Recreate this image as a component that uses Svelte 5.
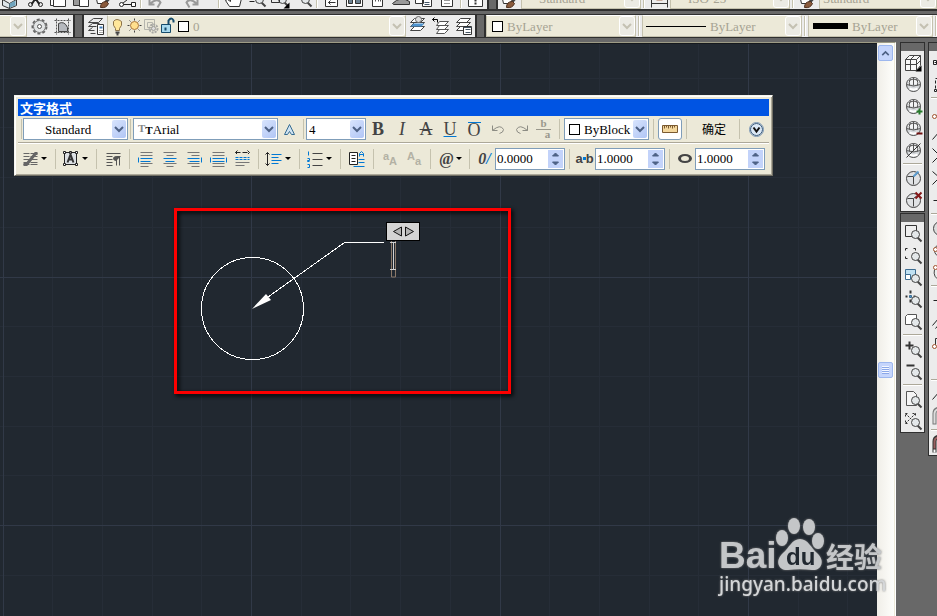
<script lang="ts">
    type Item = { icon: string; label: string; wide?: boolean };

    // shared shapes, drawn on a 22x22 grid
    const lens =
        '<path d="M15 15l4 4" stroke="#444" stroke-width="2"/><circle cx="13" cy="12" r="4" fill="#e4e8ea" stroke="#444"/>';
    const globe =
        '<circle cx="11" cy="11" r="7" fill="#d4d7da" stroke="#4a4a4a"/><path d="M6 6q5-3 10 0l1 5H5z" fill="#f2f3f4"/><path d="M6 7q5-3 10 0M4 11q7 3 14 0M8 5q-2 4-1 7M14 5q2 4 1 7M11 4v8" fill="none" stroke="#555"/><path d="M7 15q4 2 8 0" fill="none" stroke="#fff" stroke-width="2"/>';
    const solid =
        '<circle cx="11" cy="11" r="7" fill="#e0e2e4" stroke="#444"/><path d="M5 9h6l5-4M11 9v8" fill="none" stroke="#444"/>';
    const sheets =
        '<path d="M7 3h10l-4 4H3zM7 7h10l-4 4H3zM7 11h10l-4 4H3z" fill="#fff" stroke="#444"/>';
    const node = (x: number, y: number) =>
        `<circle cx="${x}" cy="${y}" r="2" fill="#fff" stroke="#a0522d"/>`;

    const icons: Record<string, string> = {
        box: '<path d="M1 12l7-5 7 5v6l-7 3-7-3zM1 12l7 4 7-4M8 16v5" fill="#dfe6ea" stroke="#333"/><path d="M8 16l6-3v5l-6 2z" fill="#6fa4bd"/>',
        cut: '<path d="M7 5l8 12M15 5L7 17" stroke="#222" stroke-width="2"/><circle cx="6" cy="17" r="2" fill="none" stroke="#222"/><circle cx="16" cy="17" r="2" fill="none" stroke="#222"/>',
        copy: '<path d="M3 6h11v12H3z" fill="#fff" stroke="#333"/><path d="M6 10h12v9H6z" fill="#fff" stroke="#333"/>',
        paste: '<path d="M3 4h11v14H3z" fill="#999" stroke="#333"/><path d="M9 10h9v9H9z" fill="#fff" stroke="#333"/>',
        brush: '<path d="M2 7h12v9H4z" fill="#fff" stroke="#333"/><path d="M18 8l-6 7" stroke="#444" stroke-width="3"/><path d="M13 14q-6 0-6 6 6 1 8-4z" fill="#8a5a3c" stroke="#4e3020"/>',
        edit: '<path d="M4 17h12M6 16l10-8" stroke="#222"/><circle cx="5" cy="17" r="2" fill="#fff" stroke="#222"/><path d="M15 15h4v4h-4z" fill="#fff" stroke="#222"/>',
        undo: '<path d="M5 11v6h5M6 16q7-6 10-1l-3 5" fill="none" stroke="#999" stroke-width="2"/>',
        redo: '<path d="M17 11v6h-5M16 16q-7-6-10-1l3 5" fill="none" stroke="#999" stroke-width="2"/>',
        hand: '<path d="M6 19l-4-6 2-1 3 2V6l4-1 4 2 3 4-2 8z" fill="#fff" stroke="#333"/>',
        zoomIn: `${lens}<path d="M3 14h5" stroke="#222"/>`,
        zoomWin: `${lens}<path d="M2 6h8v9H2z" fill="none" stroke="#333"/><path d="M20 15v6h-6z" fill="#000"/>`,
        zoomPrev: lens,
        panel: '<path d="M4 4h12v15H4z" fill="#fff" stroke="#333"/><path d="M7 15h7M9 13l-2 2 2 2" fill="none" stroke="#333"/>',
        center: '<path d="M2 5h16v14H2z" fill="#fff" stroke="#333"/><path d="M4 12h4v4H4zM11 12h5v4h-5z" fill="#6d8291" stroke="#333"/>',
        palette: '<path d="M5 4h10v15H5z" fill="#fff" stroke="#333"/><path d="M8 8v8M11 8v8M13 8v8" stroke="#555" stroke-dasharray="2"/>',
        sheet: '<path d="M2 16q8-8 17-2v3H3z" fill="#999" stroke="#333"/>',
        markup: '<path d="M2 8h8v8H2zM9 12h9v7H9z" fill="#fff" stroke="#333"/><path d="M11 15h5M11 17h5" stroke="#456"/>',
        calc: '<path d="M5 4h11v15H5z" fill="#fff" stroke="#333"/><path d="M8 13h6M8 16h6" stroke="#333" stroke-dasharray="1 1"/>',
        help: '<path d="M3 5h14v14H3z" fill="#fff" stroke="#333"/><path d="M10 8v6M10 15v2" stroke="#333" stroke-width="2"/>',
        dim: '<path d="M3 8v12M19 8v12M3 16h16" stroke="#333"/><path d="M8 8h6v5H8z" fill="#a56b4f"/>',
        gear: '<circle cx="11" cy="11" r="7" fill="#e3e5e6" stroke="#666" stroke-width="2" stroke-dasharray="3 2"/><circle cx="11" cy="11" r="6" fill="#e3e5e6" stroke="#777"/><circle cx="11" cy="11" r="2" fill="#fff" stroke="#555"/>',
        frame: '<path d="M5 3v16M17 3v16M3 5h16M3 17h16" stroke="#555" stroke-dasharray="2 1"/><path d="M7 8q6-3 9 4v4H7z" fill="#b6b9be" stroke="#444"/>',
        layers: '<path d="M8 3h9l-4 4H3zM7 8h7M7 8l-4 3h8M7 12l-4 3h6M5 18h5" fill="none" stroke="#444"/><path d="M12 9h6v10h-6z" fill="#fff" stroke="#333"/><path d="M14 11h3v2h-3z" fill="#3f79b5"/><path d="M14 15h3M14 17h3" stroke="#555" stroke-dasharray="1"/>',
        layerMake: `${sheets}<path d="M6 8h11l-3 3H3z" fill="#4f94cf"/><circle cx="11" cy="4" r="3" fill="#ddd" stroke="#666"/>`,
        layerPrev: '<path d="M9 6h9l-4 4H6zM9 10h9l-4 4H6zM9 14h9l-4 4H6z" fill="#fff" stroke="#555"/><path d="M2 4h5v3M4 2L2 4l2 2" fill="none" stroke="#000"/>',
        layerState: `${sheets}<path d="M10 11h8v8h-8z" fill="#fff" stroke="#333"/><path d="M10 12h8M12 14h5M12 17h5" stroke="#456"/>`,
        bulb: '<path d="M8 13q-3-3-2-7 3-4 8 0 1 4-2 7v2H8z" fill="#ffe79a" stroke="#8d744b"/><path d="M8 17h4M9 19h2" stroke="#444" stroke-width="2"/>',
        sun: '<circle cx="10" cy="10" r="4" fill="#ffe08d" stroke="#ab783f"/><path d="M10 3v2M10 15v2M3 10h2M15 10h2M5 5l1 1M14 14l1 1M15 5l-1 1M6 14l-1 1" stroke="#444"/>',
        freeze: '<path d="M3 4h10v10H3zM6 7h5v5H6z" fill="none" stroke="#b5b5ad"/><circle cx="12" cy="13" r="4" fill="none" stroke="#a8a8a4" stroke-width="2" stroke-dasharray="2 1"/><circle cx="12" cy="13" r="2" fill="#ddd" stroke="#9c9c98"/>',
        lock: '<path d="M3 9h9v8H3z" fill="#a8d9ee" stroke="#164b6b"/><path d="M10 9V5q3-4 5 0v2M7 12v3" fill="none" stroke="#164b6b" stroke-width="2"/>',
        cube: '<path d="M3 8l4-4h11v10l-4 5H3z" fill="#f7f7f7" stroke="#444"/><path d="M3 8h11v11M14 8l4-4M8 8v11M3 13h11l4-4M8 8l4-4" fill="none" stroke="#444"/><path d="M19 14v6h-6z" fill="#000"/>',
        globe,
        globeAdd: `${globe}<path d="M17 13v6M14 16h6" stroke="#277a2b" stroke-width="2"/>`,
        globeSub: `${globe}<path d="M14 16h6" stroke="#701010" stroke-width="2"/>`,
        globeOff: `${globe}<path d="M4 18L18 4" stroke="#333"/>`,
        solid: `${solid}<path d="M11 9l5-5" stroke="#5c9ccf" stroke-width="2"/>`,
        solidDel: `${solid}<path d="M13 3l6 6M19 3l-6 6" stroke="#851818" stroke-width="2"/>`,
        zWindow: `<path d="M3 3h11v11H3z" fill="#eee" stroke="#333"/>${lens}`,
        zDynamic: `<path d="M3 6V4h2M11 4h2v2M3 12v2h2" fill="none" stroke="#222"/>${lens}`,
        zScale: `<path d="M3 3h10v9H3z" fill="#bfe0f2" stroke="#3c6c91"/><path d="M3 8h5v5H3z" fill="#fff" stroke="#3c6c91"/>${lens}`,
        zCenter: `<path d="M8 2v3M8 11v3M3 8h2M11 8h2" stroke="#333" stroke-width="2"/><path d="M7 7h2v2H7z" fill="#4f94cf" stroke="#3c6c91"/>${lens}`,
        zObject: `<path d="M3 6l2-2h9v8l-2 2H3z" fill="#fff" stroke="#555"/>${lens}`,
        zPlus: `<path d="M7 3v8M3 7h8" stroke="#333" stroke-width="2"/>${lens}`,
        zMinus: `<path d="M4 5h8" stroke="#333" stroke-width="2"/>${lens}`,
        zAll: `<path d="M4 3h7l3 3v11H4z" fill="#f5f5f5" stroke="#555"/>${lens}`,
        zExtents: `<path d="M3 3l10 10M13 3L3 13M3 6V3h3M10 3h3v3M3 10v3h3" fill="none" stroke="#333" stroke-dasharray="2 1"/>${lens}`,
        dLine: '<path d="M4 11h10M3 9h3v4H3z" fill="#fff" stroke="#222"/>',
        dDash: '<path d="M5 15V5h9" fill="none" stroke="#222" stroke-dasharray="3 2"/><path d="M4 16h2v2H4z" fill="#fff" stroke="#222"/>',
        dCurve: `<path d="M6 14l6-7" stroke="#333"/>${node(4, 15)}`,
        dSlash: '<path d="M2 16l7-8" stroke="#222"/>',
        dCross: '<path d="M2 3l7 7-7 7" fill="none" stroke="#222"/>',
        dBack: '<path d="M2 4l8 7M2 17l5-5" stroke="#222" stroke-dasharray="7 2"/>',
        dFlat: '<path d="M3 11h14" stroke="#222"/>',
        dCircle: '<circle cx="10" cy="11" r="7" fill="#ddd" stroke="#444"/>',
        dEllipse: `<circle cx="10" cy="11" r="6" fill="none" stroke="#444"/>${node(5, 10)}`,
        dArc: `<path d="M4 8q-2 8 6 11" fill="none" stroke="#444"/>${node(5, 6)}`,
        dHatch: '<path d="M2 14l6-7M5 17l6-7" stroke="#222"/>',
        dRoute: `<path d="M5 12V5h5" fill="none" stroke="#333"/>${node(4, 13)}`,
        dBlank: '',
        dMagnet: '<path d="M4 19V8q0-5 6-5" fill="none" stroke="#777" stroke-width="4"/><path d="M4 18V8q0-4 6-5" fill="none" stroke="#ddd" stroke-width="2"/>',
        dMagnetOn: '<path d="M4 19V8q0-5 6-5" fill="none" stroke="#333" stroke-width="4"/><path d="M4 15V8q0-4 6-5" fill="none" stroke="#996060" stroke-width="2"/><path d="M4 16v3" stroke="#fff" stroke-width="2"/>',
        annotative: '<path d="M10 6L5 16h3l2-3 2 3h3z" fill="#cfe3f2" stroke="#356b91"/>',
        smallUndo: '<path d="M5 7v5h5M5 12q8-7 11-1 0 3-4 4" fill="none" stroke="#8c8c84"/>',
        smallRedo: '<path d="M17 7v5h-5M17 12q-8-7-11-1 0 3 4 4" fill="none" stroke="#8c8c84"/>',
        ruler: '<path d="M3 7h15v7H3z" fill="#f3d79d" stroke="#7b5a31"/><path d="M5 7v3M7 7v2M9 7v3M11 7v2M13 7v3M15 7v2" stroke="#7b5a31"/>',
        options: '<circle cx="11" cy="11" r="6" fill="#dbe8f5" stroke="#33557a"/><circle cx="11" cy="11" r="7" fill="none" stroke="#7c97b5"/><path d="M8 9l3 4 3-4" fill="none" stroke="#111" stroke-width="2"/>',
        columns: '<path d="M4 5h6M4 8h6M4 11h6M4 14h6M4 16h6M11 5h7M11 8h7M11 11h7M11 14h7M11 16h7" stroke="#666"/><path d="M4 16h3L16 5h2" fill="none" stroke="#666" stroke-width="3"/>',
        justify: '<path d="M4 4h12v12H4z" fill="#dce0e3" stroke="#222"/><path d="M3 3h2v2H3zM9 3h2v2H9zM15 3h2v2h-2zM3 15h2v2H3zM15 15h2v2h-2z" fill="#fff" stroke="#222"/><path d="M7 14l3-8 3 8M8 11h4" fill="none" stroke="#333" stroke-width="2"/>',
        paragraph: '<path d="M4 5h14M4 8h6M4 11h6M4 14h6M4 17h6" stroke="#555"/><path d="M14 17V8M17 17V8M18 8h-4q-3 0-3 2t3 2" fill="#555" stroke="#555"/>',
        left: '<path d="M5 4h12M5 7h12M5 15h12M5 18h8" stroke="#777"/><path d="M3 9v5M5 10h12M5 13h10" stroke="#0078d4"/>',
        middle: '<path d="M4 4h13M7 7h7M4 15h13M7 18h7" stroke="#777"/><path d="M4 10h13M6 13h9" stroke="#0078d4"/>',
        right: '<path d="M4 4h12M8 7h8M4 15h12M8 18h8" stroke="#777"/><path d="M18 9v5M4 10h12M6 13h10" stroke="#0078d4"/>',
        full: '<path d="M5 4h12M5 7h12M5 15h12M5 18h12" stroke="#777"/><path d="M3 9v5M19 9v5M5 10h12M5 13h12" stroke="#0078d4"/>',
        spread: '<path d="M4 4h14M6 2L4 4l2 2M16 2l2 2-2 2" fill="none" stroke="#222" stroke-dasharray="5 2"/><path d="M4 9h14M4 11h14" stroke="#0078d4" stroke-dasharray="3 1"/><path d="M4 14h14M4 17h9" stroke="#777"/>',
        spacing: '<path d="M4 4v13M2 6l2-2 2 2M2 15l2 2 2-2" fill="none" stroke="#222"/><path d="M8 6h10M8 9h7M8 12h10M8 15h7" stroke="#0078d4"/>',
        numbers: '<path d="M4 3v4M3 10h2v2H3v1h2M3 16h2v3H3" fill="none" stroke="#0078d4"/><path d="M8 5h10M8 11h10M8 17h10" stroke="#444"/>',
        field: '<path d="M3 4h8v12H3z" fill="#fff" stroke="#222"/><path d="M5 7h4M5 10h4M5 13h4" stroke="#222"/><path d="M13 8V5l2-2 2 2v3M13 6h4M12 11h6M12 14h6M7 18h11" fill="none" stroke="#0078d4"/>',
    };

    const standard: (Item | null)[] = [
        { icon: 'box', label: '3D' },
        { icon: 'cut', label: 'Cut' },
        { icon: 'copy', label: 'Copy' },
        { icon: 'paste', label: 'Paste' },
        { icon: 'brush', label: 'Match properties' },
        { icon: 'edit', label: 'Block editor' },
        null,
        { icon: 'undo', label: 'Undo', wide: true },
        { icon: 'redo', label: 'Redo', wide: true },
        null,
        { icon: 'hand', label: 'Pan' },
        { icon: 'zoomIn', label: 'Zoom realtime' },
        { icon: 'zoomWin', label: 'Zoom window' },
        { icon: 'zoomPrev', label: 'Zoom previous' },
        null,
        { icon: 'panel', label: 'Properties' },
        { icon: 'center', label: 'Design center' },
        { icon: 'palette', label: 'Tool palettes' },
        { icon: 'sheet', label: 'Sheet set' },
        { icon: 'markup', label: 'Markup' },
        { icon: 'calc', label: 'Calculator' },
        null,
        { icon: 'help', label: 'Help' },
    ];

    const modeling = ['cube', 'globe', 'globeAdd', 'globeSub', 'globeOff', '', 'solid', 'solidDel'];
    const zooming = ['zWindow', 'zDynamic', 'zScale', 'zCenter', 'zObject', '', 'zPlus', 'zMinus', '', 'zAll', 'zExtents'];
    const snapping = [
        'dLine', 'dDash', '', 'dCurve', 'dSlash', 'dCross', 'dBack', 'dFlat', '', 'dCircle', 'dEllipse', 'dArc', '',
        'dFlat', 'dHatch', 'dRoute', 'dBlank', '', 'dSlash', 'dMagnet', '', 'dMagnetOn',
    ];

    // every fifth grid line is a major one
    const gridStep = 248.5 / 5;
    const gridLines = Array.from({ length: 50 }, (_, i) => ({
        x: Math.floor(3 + i * gridStep),
        y: Math.floor(-15.5 + i * gridStep),
        major: i % 5 === 0,
    }));

    let oblique = $state('0.0000');
    let tracking = $state('1.0000');
    let widthFactor = $state('1.0000');

    const step = (value: string, by: number) => (Number(value) + by).toFixed(4);
</script>

{#snippet glyph(name: string)}
    <svg class="glyph" viewBox="-0.5 -0.5 22 22" aria-hidden="true">{@html icons[name]}</svg>
{/snippet}

{#snippet tool(name: string, label: string)}
    <button class="tool" aria-label={label}>{@render glyph(name)}</button>
{/snippet}

{#snippet chevron()}
    <span class="arrow">
        <svg viewBox="0 0 14 18" aria-hidden="true"><path d="M3 7l4 4 4-4" /></svg>
    </span>
{/snippet}

{#snippet dock(names: string[])}
    <div class="palette">
        <div class="palette-grip"></div>
        {#each names as name}
            {#if name}
                {@render tool(name, name)}
            {:else}
                <hr />
            {/if}
        {/each}
    </div>
{/snippet}

{#snippet spinner(value: string, label: string, change: (v: string) => void)}
    <span class="spinner">
        <input aria-label={label} {value} onchange={(e) => change(e.currentTarget.value)} />
        <span class="steps">
            <button aria-label="{label} up" onclick={() => change(step(value, 1))}>
                <svg viewBox="0 0 14 9"><path d="M4 6l3-3 3 3z" /></svg>
            </button>
            <button aria-label="{label} down" onclick={() => change(step(value, -1))}>
                <svg viewBox="0 0 14 9"><path d="M4 3l3 3 3-3z" /></svg>
            </button>
        </span>
    </span>
{/snippet}

<div class="app">
    <header>
        <div class="bar clipped">
            <div class="group">
                {#each standard as item}
                    {#if item}
                        <button class="tool" class:wide={item.wide} aria-label={item.label}>{@render glyph(item.icon)}</button>
                    {:else}
                        <i class="sep"></i>
                    {/if}
                {/each}
            </div>
            <i class="grip"></i>
            <div class="group grow">
                {@render tool('brush', 'Text style')}
                <div class="combo off style">
                    <select disabled aria-label="Text style"><option>Standard</option></select>
                    {@render chevron()}
                </div>
                <i class="sep"></i>
                {@render tool('dim', 'Dimension style')}
                <div class="combo off style">
                    <select disabled aria-label="Dimension style"><option>ISO-25</option></select>
                    {@render chevron()}
                </div>
                <i class="sep"></i>
                {@render tool('brush', 'Table style')}
                <div class="combo off grow tight">
                    <select disabled aria-label="Table style"><option>Standard</option></select>
                    {@render chevron()}
                </div>
            </div>
        </div>

        <div class="bar">
            <div class="group">
                <div class="combo off stub">{@render chevron()}</div>
                {@render tool('gear', 'Workspace settings')}
                {@render tool('frame', 'My workspace')}
            </div>
            <i class="grip"></i>
            <div class="group grow">
                {@render tool('layers', 'Layer properties')}
                <div class="combo off grow layer">
                    <span class="states">
                        {@render glyph('bulb')}
                        {@render glyph('sun')}
                        {@render glyph('freeze')}
                        {@render glyph('lock')}
                    </span>
                    <span class="swatch"></span>
                    <select disabled aria-label="Layer"><option>0</option></select>
                    {@render chevron()}
                </div>
                {@render tool('layerMake', 'Make layer current')}
                {@render tool('layerPrev', 'Layer previous')}
                {@render tool('layerState', 'Layer states')}
            </div>
            <i class="grip"></i>
            <div class="group">
                <div class="combo off color">
                    <span class="swatch"></span>
                    <select disabled aria-label="Color"><option>ByLayer</option></select>
                    {@render chevron()}
                </div>
                <i class="sep"></i>
                <div class="combo off linetype">
                    <span class="thin"></span>
                    <select disabled aria-label="Linetype"><option>ByLayer</option></select>
                    {@render chevron()}
                </div>
                <i class="sep"></i>
                <div class="combo off weight">
                    <span class="thick"></span>
                    <select disabled aria-label="Lineweight"><option>ByLayer</option></select>
                    {@render chevron()}
                </div>
                <i class="sep"></i>
            </div>
        </div>
    </header>

    <main>
        <div class="view">
            <div class="canvas">
                <svg class="drawing" aria-label="Drawing">
                    {#each gridLines as line}
                        {#if !line.major}
                            <rect class="minor" x={line.x} y="0" width="1" height="100%" />
                            <rect class="minor" x="0" y={line.y} width="100%" height="1" />
                        {/if}
                    {/each}
                    {#each gridLines as line}
                        {#if line.major}
                            <rect class="major" x={line.x} y="0" width="1" height="100%" />
                            <rect class="major" x="0" y={line.y} width="100%" height="1" />
                        {/if}
                    {/each}
                    <circle class="ink" cx="252.5" cy="264.5" r="51" />
                    <path class="ink" d="M384 198.5H344.5L268 253" />
                    <path class="tip" d="M252 265l14-15 5 6z" />
                    <path class="caret" d="M391.5 197v36h4v-36" />
                    <path class="beam" d="M390 198.5h6M390 225.5h6M393.5 198v27" />
                    <rect class="frame" x="175.5" y="165.5" width="334" height="183" />
                    <g class="width-handle">
                        <rect x="386.5" y="178.5" width="33" height="18" />
                        <path d="M401.5 183v9l-8-4.5zM405.5 183v9l8-4.5z" />
                    </g>
                </svg>

                <section class="dialog" aria-label="文字格式">
                    <h1>文字格式</h1>
                    <div class="line first">
                        <i class="rule"></i>
                        <div class="combo font-style">
                            <select aria-label="Style"><option>Standard</option></select>
                            {@render chevron()}
                        </div>
                        <i class="rule"></i>
                        <div class="combo font-name">
                            <span class="tt" aria-hidden="true"><b>T</b><b>T</b></span>
                            <select aria-label="Font"><option>Arial</option></select>
                            {@render chevron()}
                        </div>
                        {@render tool('annotative', 'Annotative')}
                        <i class="rule"></i>
                        <div class="combo size">
                            <select aria-label="Text height"><option>4</option></select>
                            {@render chevron()}
                        </div>
                        <button class="tool letter bold">B</button>
                        <button class="tool letter italic">I</button>
                        <button class="tool letter strike">A</button>
                        <button class="tool letter under">U</button>
                        <button class="tool letter"><span class="over">O</span></button>
                        {@render tool('smallUndo', 'Undo')}
                        {@render tool('smallRedo', 'Redo')}
                        <button class="tool stack"><span>b</span><span>a</span></button>
                        <i class="rule loose"></i>
                        <div class="combo block-color">
                            <span class="swatch"></span>
                            <select aria-label="Color"><option>ByBlock</option></select>
                            {@render chevron()}
                        </div>
                        <i class="rule loose"></i>
                        <button class="tool ruler" aria-label="Ruler">{@render glyph('ruler')}</button>
                        <i class="rule loose"></i>
                        <button class="ok">确定</button>
                        <i class="rule"></i>
                        <button class="tool options" aria-label="Options">{@render glyph('options')}</button>
                    </div>

                    <div class="line second">
                        <button class="tool drop" aria-label="Columns">{@render glyph('columns')}</button>
                        <i class="rule"></i>
                        <button class="tool drop" aria-label="Justification">{@render glyph('justify')}</button>
                        <i class="rule"></i>
                        {@render tool('paragraph', 'Paragraph')}
                        <i class="rule"></i>
                        {@render tool('left', 'Left')}
                        {@render tool('middle', 'Center')}
                        {@render tool('right', 'Right')}
                        {@render tool('full', 'Justify')}
                        {@render tool('spread', 'Distribute')}
                        <i class="rule"></i>
                        <button class="tool drop" aria-label="Line spacing">{@render glyph('spacing')}</button>
                        <i class="rule"></i>
                        <button class="tool drop" aria-label="Numbering">{@render glyph('numbers')}</button>
                        <i class="rule"></i>
                        {@render tool('field', 'Insert field')}
                        <i class="rule"></i>
                        <button class="tool case"><span>a</span><span>A</span></button>
                        <button class="tool case"><span>A</span><span>a</span></button>
                        <i class="rule"></i>
                        <button class="tool drop at">@</button>
                        <i class="rule"></i>
                        <span class="sign slant">0<em>/</em></span>
                        {@render spinner(oblique, 'Oblique angle', (v) => (oblique = v))}
                        <i class="rule"></i>
                        <span class="sign">a<i class="dot"></i>b</span>
                        {@render spinner(tracking, 'Tracking', (v) => (tracking = v))}
                        <i class="rule"></i>
                        <span class="sign"><i class="ring"></i></span>
                        {@render spinner(widthFactor, 'Width factor', (v) => (widthFactor = v))}
                    </div>
                </section>
            </div>

            <div class="scroll">
                <button class="scroll-up" aria-label="Scroll up">
                    <svg viewBox="0 0 16 16"><path d="M4 10l4-4 4 4" /></svg>
                </button>
                <button class="thumb" aria-label="Scroll thumb"><i></i></button>
            </div>

            <svg class="watermark" viewBox="0 0 172 84">
                <g class="paw">
                    <ellipse cx="65" cy="23" rx="6" ry="8" />
                    <ellipse cx="77" cy="11" rx="6" ry="8" />
                    <ellipse cx="92" cy="12" rx="6" ry="8" />
                    <ellipse cx="101" cy="26" rx="6" ry="8" />
                    <path d="M83 24c8 0 11 9 17 14 9 8 4 18-5 17-8-1-16-1-24 0-9 1-14-9-5-17 6-5 9-14 17-14z" />
                </g>
                <text class="bai" x="2" y="53">Bai</text>
                <text class="du" x="69" y="50">du</text>
                <text class="exp" x="109" y="53">经验</text>
                <text class="url" x="2" y="76">jingyan.baidu.com</text>
            </svg>
        </div>

        <aside>
            <div class="docked">
                {@render dock(modeling)}
                {@render dock(zooming)}
            </div>
            {@render dock(snapping)}
        </aside>
    </main>
</div>

<style>
    :global(body) {
        margin: 0;
        overflow: hidden;
    }

    .app {
        display: flex;
        flex-direction: column;
        height: 100vh;
        background: #686868;
        font-family: "Liberation Serif", "Noto Sans CJK SC", serif;
        font-size: 13px;
    }

    button {
        padding: 0;
        border: 0;
        background: none;
        color: #444;
        font-family: inherit;
    }

    header {
        display: flex;
        flex-direction: column;
        gap: 3px;
        padding-bottom: 4px;
    }

    .bar {
        display: flex;
        height: 22px;
        border-top: 1px solid #2f2f2f;
        border-bottom: 1px solid #2f2f2f;
    }

    .bar.clipped {
        height: 9px;
        border-top: 0;
        border-bottom-width: 2px;
        align-items: flex-end;
        overflow: hidden;
    }

    .group {
        display: flex;
        flex: none;
        height: 22px;
        background: #ececec;
    }

    .group.grow,
    .grow {
        flex: 1;
        min-width: 0;
    }

    .grip {
        flex: none;
        width: 7px;
        height: 22px;
        border: solid #2f2f2f;
        border-width: 0 2px;
        background: #686868;
    }

    .sep {
        width: 1px;
        height: 20px;
        margin: 1px 2px;
        border-right: 1px solid #fff;
        background: #c5c2ae;
    }

    .sep:last-child {
        margin-right: 0;
    }

    .tool {
        display: flex;
        flex: none;
        align-items: center;
        justify-content: center;
        width: 23px;
        height: 22px;
    }

    .tool.wide {
        justify-content: flex-start;
        width: 36px;
    }

    .glyph {
        flex: none;
        width: 22px;
        height: 22px;
    }

    .combo {
        display: flex;
        align-items: center;
        box-sizing: border-box;
        height: 22px;
        padding: 1px;
        border: 1px solid #7f9db9;
        background: #fff;
    }

    .combo select {
        flex: 1;
        min-width: 0;
        height: 18px;
        padding: 0 0 0 4px;
        border: 0;
        outline: 0;
        appearance: none;
        background: none;
        color: #000;
        font: inherit;
        opacity: 1;
    }

    .combo.off {
        border-color: #fff #c5c2ae #c5c2ae #c5c2ae;
        background: #ece9d8;
    }

    .combo.off select {
        color: #a6a393;
    }

    .arrow {
        display: flex;
        flex: none;
        width: 14px;
        height: 18px;
        border-radius: 2px;
        background: linear-gradient(135deg, #d8e4fd, #b0c5f5);
    }

    .arrow svg {
        width: 14px;
        height: 18px;
        fill: none;
        stroke: #4d6185;
        stroke-width: 2;
    }

    .off .arrow {
        outline: 1px solid #fff;
        background: #ecebe4;
    }

    .off .arrow svg {
        stroke: #c4c1b2;
    }

    .swatch {
        flex: none;
        box-sizing: border-box;
        width: 11px;
        height: 11px;
        margin-left: 4px;
        border: 1px solid #000;
        background: #fff;
    }

    .stub {
        width: 27px;
        justify-content: flex-end;
        border-left: 0;
    }

    .style {
        width: 120px;
    }

    .style select {
        padding-left: 16px;
    }

    .tight select {
        padding-left: 2px;
    }

    .states {
        display: flex;
    }

    .states .glyph {
        margin: 0 -3px 0 -2px;
    }

    .layer .swatch {
        margin-left: 1px;
    }

    .color {
        width: 150px;
    }

    .linetype {
        width: 160px;
    }

    .weight {
        width: 125px;
    }

    .thin {
        width: 60px;
        height: 1px;
        margin-left: 2px;
        background: #000;
    }

    .thick {
        width: 35px;
        height: 6px;
        margin-left: 3px;
        background: #000;
    }

    main {
        display: grid;
        flex: 1;
        grid-template-columns: 1fr 41px;
        min-height: 0;
    }

    .view {
        position: relative;
        display: grid;
        grid-template-columns: 1fr 18px;
        border-top: 1px solid #9d9b85;
        border-right: 1px solid #fff;
    }

    .canvas {
        position: relative;
        overflow: hidden;
        border-top: 1px solid #16191d;
        background: #212830;
    }

    .drawing {
        display: block;
        width: 100%;
        height: 100%;
    }

    .minor {
        fill: #262d37;
    }

    .major {
        fill: #313947;
    }

    .ink {
        fill: none;
        stroke: #fff;
        shape-rendering: crispEdges;
    }

    .tip {
        fill: #fff;
    }

    .caret {
        fill: none;
        stroke: #8a7868;
    }

    .beam {
        fill: none;
        stroke: #d0d0d0;
    }

    .frame {
        fill: none;
        stroke: #fe0000;
        stroke-width: 3;
        filter: drop-shadow(2px 2px 2px #000);
    }

    .width-handle rect {
        fill: #d4d4d4;
        stroke: #000;
    }

    .width-handle path {
        fill: #b4b4b4;
        stroke: #111;
    }

    /* floats over the drawing */
    .dialog {
        position: absolute;
        top: 51px;
        left: 14px;
        padding: 3px 3px 2px;
        border: 1px solid;
        border-color: #f6f5ee #716f64 #716f64 #f6f5ee;
        background: #ece9d8;
        box-shadow: inset 1px 1px #fff, inset -1px -1px #aca899;
    }

    .dialog h1 {
        margin: 0;
        padding-left: 2px;
        background: #0054e3;
        color: #fff;
        font: bold 13px/17px "Noto Sans CJK SC", sans-serif;
    }

    .line {
        display: flex;
        align-items: center;
    }

    .first {
        height: 26px;
        padding-left: 3px;
        border-bottom: 1px solid #aca899;
    }

    .second {
        height: 29px;
        padding-left: 1px;
        border-top: 1px solid #fff;
    }

    .rule {
        width: 1px;
        height: 20px;
        margin: 0 2px;
        background: #c5c2ae;
    }

    .rule.loose {
        margin: 0 4px;
    }

    .first .rule:first-child {
        margin: 0 1px 0 0;
    }

    .font-style {
        width: 105px;
    }

    .font-style select {
        padding-left: 20px;
    }

    .font-name {
        width: 145px;
    }

    .tt {
        display: flex;
        padding-left: 3px;
        font: bold 11px/14px "Liberation Serif", serif;
    }

    .tt b:first-child {
        padding-bottom: 3px;
        color: #888;
    }

    .tt b:last-child {
        padding-top: 2px;
    }

    .font-name select {
        padding-left: 0;
    }

    .size {
        width: 60px;
    }

    .size select {
        padding-left: 1px;
    }

    .block-color {
        width: 85px;
    }

    .block-color .swatch {
        margin-left: 3px;
    }

    .letter {
        width: 24px;
        font-size: 18px;
        line-height: 20px;
    }

    .bold {
        font-weight: bold;
    }

    .italic {
        font-style: italic;
    }

    .strike {
        text-decoration: line-through;
    }

    .under {
        text-decoration: underline #0078d4;
    }

    .over {
        border-top: 1px solid #0078d4;
        line-height: 14px;
    }

    .stack {
        flex-direction: column;
        color: #9a988c;
        font: bold 11px/9px "Liberation Serif", serif;
    }

    .stack span:first-child {
        padding: 0 4px 1px;
        border-bottom: 1px solid #9a988c;
    }

    .stack span:last-child {
        padding-left: 8px;
    }

    .ruler {
        box-sizing: border-box;
        width: 24px;
        border: 1px solid #7f9db9;
        border-radius: 3px;
        background: #fff;
    }

    .ok {
        width: 46px;
        color: #000;
        font: 12px/20px "Noto Sans CJK SC", sans-serif;
    }

    .options {
        width: 27px;
    }

    .second .rule {
        margin: 0 4px;
    }

    .second .tool {
        width: 24px;
    }

    .second .drop {
        justify-content: flex-start;
        width: 32px;
    }

    .drop::after {
        border: 3px solid transparent;
        border-top-color: #000;
        border-bottom: 0;
        content: "";
    }

    .second .at {
        width: 30px;
        padding-left: 4px;
        gap: 2px;
        font: bold 16px/20px "Liberation Serif", serif;
    }

    .case {
        color: #b3b1a4;
        font: bold 11px/14px "Liberation Sans", sans-serif;
    }

    .case span:first-child {
        padding-bottom: 6px;
    }

    .case span:last-child {
        padding-top: 4px;
    }

    .sign {
        display: flex;
        align-items: center;
        justify-content: center;
        width: 21px;
        color: #444;
        font: bold 13px/20px "Liberation Sans", sans-serif;
    }

    .sign em {
        color: #0078d4;
    }

    .slant {
        font: italic bold 16px/20px "Liberation Serif", serif;
    }

    .dot {
        width: 3px;
        height: 3px;
        background: #0078d4;
    }

    .ring {
        width: 8px;
        height: 5px;
        border: solid #444;
        border-width: 2px 3px;
        border-radius: 50%;
    }

    .spinner {
        display: flex;
        box-sizing: border-box;
        width: 70px;
        height: 22px;
        padding: 1px;
        border: 1px solid #7f9db9;
        background: #fff;
    }

    .spinner input {
        flex: 1;
        min-width: 0;
        padding: 0;
        border: 0;
        outline: 0;
        color: #000;
        font: inherit;
    }

    .steps {
        display: grid;
        width: 15px;
    }

    .steps button {
        display: flex;
        background: #c3d3fa;
    }

    .steps svg {
        width: 15px;
        height: 9px;
        fill: #4d6185;
        stroke: #4d6185;
    }

    .scroll {
        display: flex;
        flex-direction: column;
        align-items: center;
        padding-top: 2px;
        border-right: 1px solid #ece9d8;
        background: linear-gradient(90deg, #f0eee8, #fefefb);
    }

    .scroll button {
        box-sizing: border-box;
        width: 15px;
        height: 16px;
        border: 1px solid #9db7ee;
        border-radius: 2px;
        background: #c5d5fc;
    }

    .scroll svg {
        display: block;
        fill: none;
        stroke: #4d6185;
        stroke-width: 2;
    }

    .scroll .thumb {
        display: grid;
        margin-top: 301px;
        place-items: center;
    }

    .thumb i {
        width: 7px;
        height: 8px;
        background: repeating-linear-gradient(#f4f7ff 0 1px, #8ba8e8 1px 2px);
    }

    .watermark {
        position: absolute;
        right: 6px;
        bottom: 17px;
        width: 172px;
        height: 84px;
        fill: #c4c6c8;
        font-weight: bold;
        filter: drop-shadow(0 0 1px #777);
    }

    .bai {
        font-family: "Liberation Sans", sans-serif;
        font-size: 37px;
    }

    .du {
        fill: #212830;
        font-family: "Liberation Sans", sans-serif;
        font-size: 24px;
    }

    .exp {
        font-family: "Noto Sans CJK SC", sans-serif;
        font-size: 28px;
    }

    .url {
        fill: #d4d6d8;
        font-family: "Noto Sans", sans-serif;
        font-size: 19px;
        font-weight: 500;
    }

    aside {
        display: flex;
        align-items: flex-start;
        gap: 3px;
        padding-left: 4px;
        overflow: hidden;
    }

    .docked {
        display: grid;
        gap: 1px;
    }

    .palette {
        flex: none;
        box-sizing: border-box;
        width: 25px;
        border: 1px solid #2f2f2f;
        background: #ececec;
    }

    .palette-grip {
        height: 8px;
        background: #686868;
    }

    .palette hr {
        height: 1px;
        margin: 2px;
        border: 0;
        border-bottom: 1px solid #fff;
        background: #aca899;
    }
</style>
